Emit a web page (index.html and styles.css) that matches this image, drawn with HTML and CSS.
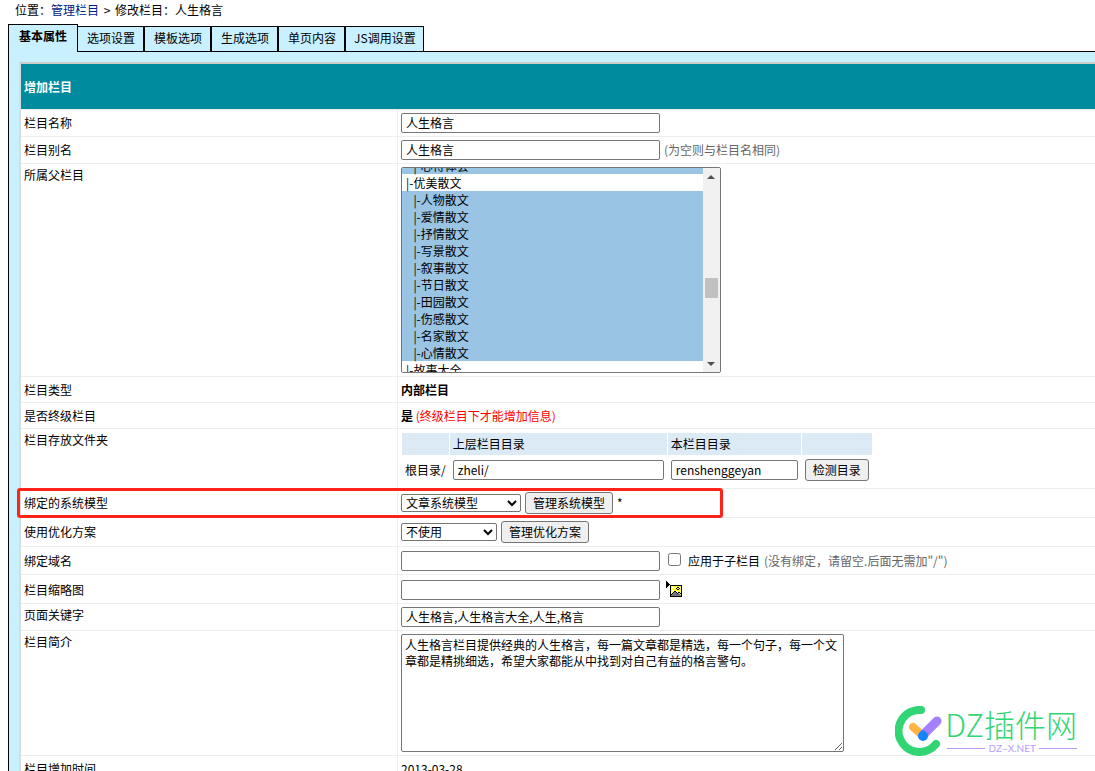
FILE: index.html
```html
<!DOCTYPE html>
<html lang="zh-CN">
<head>
<meta charset="utf-8">
<title>修改栏目</title>
<link rel="stylesheet" href="styles.css">
</head>
<body>
<nav class="crumbs">位置：<a href="#">管理栏目</a> <span class="sep">&gt;</span> 修改栏目：人生格言</nav>
<div class="tabs">
  <button class="tab active" type="button">基本属性</button>
  <button class="tab" type="button">选项设置</button>
  <button class="tab" type="button">模板选项</button>
  <button class="tab" type="button">生成选项</button>
  <button class="tab" type="button">单页内容</button>
  <button class="tab" type="button">JS调用设置</button>
</div>
<form class="panel">
<table class="form">
  <thead><tr><th colspan="2">增加栏目</th></tr></thead>
  <tbody>
  <tr><td class="label"><label for="name">栏目名称</label></td><td><div class="line"><input class="text" id="name" value="人生格言"></div></td></tr>
  <tr><td class="label"><label for="alias">栏目别名</label></td><td><div class="line"><input class="text" id="alias" value="人生格言"><span class="hint">(为空则与栏目名相同)</span></div></td></tr>
  <tr class="top"><td class="label"><label for="parent">所属父栏目</label></td><td>
    <div class="listbox">
      <select id="parent" multiple>
        <option class="mark">&nbsp;&nbsp;|-心得体会</option>
        <option>|-优美散文</option>
        <option class="mark">&nbsp;&nbsp;|-人物散文</option>
        <option class="mark">&nbsp;&nbsp;|-爱情散文</option>
        <option class="mark">&nbsp;&nbsp;|-抒情散文</option>
        <option class="mark">&nbsp;&nbsp;|-写景散文</option>
        <option class="mark">&nbsp;&nbsp;|-叙事散文</option>
        <option class="mark">&nbsp;&nbsp;|-节日散文</option>
        <option class="mark">&nbsp;&nbsp;|-田园散文</option>
        <option class="mark">&nbsp;&nbsp;|-伤感散文</option>
        <option class="mark">&nbsp;&nbsp;|-名家散文</option>
        <option class="mark">&nbsp;&nbsp;|-心情散文</option>
        <option>|-故事大全</option>
      </select>
      <div class="scroll" aria-hidden="true">
        <svg width="16" height="16"><path d="M4 11h8L8 7z" fill="#505050"/></svg>
        <div class="thumb"></div>
        <svg width="16" height="16"><path d="M4 6h8l-4 4z" fill="#505050"/></svg>
      </div>
    </div></td></tr>
  <tr class="plain"><td class="label">栏目类型</td><td><b>内部栏目</b></td></tr>
  <tr class="plain"><td class="label">是否终级栏目</td><td><b>是</b> <span class="red">(终级栏目下才能增加信息)</span></td></tr>
  <tr class="top"><td class="label">栏目存放文件夹</td><td>
    <table class="dirs">
      <tr class="head"><td></td><td><label for="updir">上层栏目目录</label></td><td><label for="dir">本栏目目录</label></td><td></td></tr>
      <tr><td>根目录/</td><td><input class="text updir" id="updir" value="zheli/"></td><td><input class="text dir" id="dir" value="renshenggeyan"></td><td><button class="btn" type="button">检测目录</button></td></tr>
    </table></td></tr>
  <tr><td class="label bound"><label for="model">绑定的系统模型</label><span class="outline"></span></td><td><div class="line">
    <span class="pick model"><select id="model"><option>文章系统模型</option></select><svg class="arrow" viewBox="0 0 10 8"><path d="M1 2l4 4 4-4"/></svg></span>
    <button class="btn" type="button">管理系统模型</button><span>*</span></div></td></tr>
  <tr><td class="label"><label for="plan">使用优化方案</label></td><td><div class="line">
    <span class="pick plan"><select id="plan"><option>不使用</option></select><svg class="arrow" viewBox="0 0 10 8"><path d="M1 2l4 4 4-4"/></svg></span>
    <button class="btn" type="button">管理优化方案</button></div></td></tr>
  <tr class="mid"><td class="label"><label for="domain">绑定域名</label></td><td><div class="line"><input class="text" id="domain"><input class="check" type="checkbox" id="sub"><label for="sub">应用于子栏目</label><span class="hint">(没有绑定，请留空.后面无需加"/")</span></div></td></tr>
  <tr class="image"><td class="label"><label for="thumb">栏目缩略图</label></td><td><div class="line"><input class="text" id="thumb"><a class="pic" href="#" aria-label="选择图片"><svg width="18" height="18" viewBox="0 0 18 18" shape-rendering="crispEdges">
    <path d="M1 0h1v1h1v1h1v1h1v1H4v1H3v1H2v1H1z"/><path d="M5 4h12v12H5z"/><path d="M6 5h10v10H6z" fill="#ffff3c"/><path d="M7 6h2v1H7zM10 6h1v1h-1zM7 9h2v1H7zM11 10h1v1h-1zM14 10h1v1h-1z" fill="#fff"/><path d="M12 6h2v1h-2zM12 8h2v1h-2zM11 7h1v1h-1zM14 7h1v1h-1z"/><path d="M6 15v-1h1v-1h1v-1h1v-1h2v1h1v1h1v-1h1v1h1v1h1v1z" fill="#777"/><path d="M8 11h1v-1h2v1h1v1h1v1h-1v-1h-1v-1H9v1H8zM6 13h1v-1h1v1H7v1H6zM13 11h2v1h1v1h-1v-1h-2z"/></svg></a></div></td></tr>
  <tr class="top"><td class="label"><label for="keys">页面关键字</label></td><td><div class="line"><input class="text" id="keys" value="人生格言,人生格言大全,人生,格言"></div></td></tr>
  <tr class="top"><td class="label"><label for="intro">栏目简介</label></td><td><textarea id="intro">人生格言栏目提供经典的人生格言，每一篇文章都是精选，每一个句子，每一个文章都是精挑细选，希望大家都能从中找到对自己有益的格言警句。</textarea></td></tr>
  <tr class="plain"><td class="label">栏目增加时间</td><td>2013-03-28</td></tr>
  </tbody>
</table>
</form>
<div class="brand">
  <svg width="50" height="50" viewBox="0 0 50 50" fill="none" stroke-linecap="round">
    <path d="M26 4A21 21 0 1 0 41 38" stroke="#32d573" stroke-width="8"/>
    <path d="M18 21l9 8" stroke="#ffb640" stroke-width="8"/>
    <path d="M28 29l14-14" stroke="#a580ff" stroke-width="9"/>
    <path d="M28 24c3 2 5 3 5 6a5 5 0 0 1-10 0c0-3 2-4 5-6z" fill="#1684fc"/>
  </svg>
  <div class="words"><div class="title">DZ插件网</div><div class="site">DZ–X.NET</div></div>
</div>
<script src="main.js"></script>
</body>
</html>
```
FILE: styles.css
```css
* { box-sizing: border-box; }
body {
  margin: 0;
  height: 100vh;
  overflow: hidden;
  position: relative;
  background: #fff;
  color: #000;
  font: 12px/18px "Noto Sans CJK SC", sans-serif;
}
input, select, button, textarea { font: inherit; color: #000; margin: 0; }
.crumbs { padding: 1px 15px 5px; }
.crumbs a { color: #002280; text-decoration: none; }
.sep { margin: 0 2px; }
.tabs { display: flex; align-items: flex-end; height: 27px; padding-left: 8px; }
.tab {
  height: 25px;
  padding: 0 8px 3px 9px;
  border: 1px solid #000;
  border-bottom: 0;
  background: #c8f0ff;
}
.tab:last-child { padding: 0 7px 3px 8px; }
.tab.active {
  position: relative;
  height: 28px;
  padding: 0 10px 6px;
  margin-bottom: -1px;
  font-weight: bold;
}
.active + .tab { border-left: 0; }
.panel {
  border: 1px solid #000;
  border-right: 0;
  background: #c8f0ff;
  padding: 10px 0 10px 10px;
  margin-left: 8px;
}
.form {
  width: 100%;
  border-collapse: separate;
  border-spacing: 0;
  border: 2px solid #ccc;
  border-right: 0;
  border-left-color: #d4dde0;
  background: #fff;
}
.form th {
  height: 45px;
  padding: 3px;
  background: #008c9e;
  color: #fff;
  text-align: left;
}
.form > tbody > tr > td { padding: 3px; border-bottom: 1px solid #eee; }
.form > tbody > tr:first-child > td { border-top: 1px solid #eee; }
.form > tbody > tr > .label { width: 377px; border-right: 1px solid #eee; }
.top > td { vertical-align: top; }
.form > tbody > .top > .label { padding-top: 2px; }
.form > tbody > .plain > td { padding: 4px 3px 3px; }
.form > tbody > .mid > td { padding: 4px 3px 3px; }
.form > tbody > .image > td { padding: 5px 3px 3px; }
.line { display: flex; align-items: center; gap: 4px; }
.text {
  width: 259px;
  height: 20px;
  padding: 0 4px 2px;
  border: 1px solid #767676;
  border-radius: 2px;
  background: #fff;
}
.updir { width: 211px; }
.dir { width: 127px; }
.text, .btn, textarea, .dirs { display: block; }
.hint { color: #666; }
.red { color: #f00; }
.listbox {
  display: flex;
  width: 320px;
  height: 206px;
  border: 1px solid #767676;
  border-radius: 2px;
  overflow: hidden;
}
.listbox select {
  flex: 1;
  height: 204px;
  padding: 0;
  border: 0;
  border-radius: 0;
  outline: 0;
  overflow: hidden;
}
.listbox option { height: 17px; min-height: 17px; padding: 0 4px; line-height: 16px; }
.listbox .mark { padding-left: 6px; background: #99c4e4; }
.scroll {
  width: 17px;
  display: flex;
  flex-direction: column;
  background: #f1f1f1;
}
.scroll svg { flex: none; }
.thumb { height: 20px; margin: 94px 2px auto; background: #c1c1c1; }
.dirs { border-spacing: 1px; }
.dirs td { padding: 3px; }
.head td { height: 22px; padding: 2px 3px; background: #dbeaf5; }
.btn {
  height: 22px;
  padding: 0 7px;
  border: 1px solid #767676;
  border-radius: 3px;
  background: #efefef;
  white-space: nowrap;
}
.pick { position: relative; height: 18px; }
.pick select {
  appearance: none;
  display: block;
  width: 100%;
  height: 18px;
  padding: 0 4px;
  border: 1px solid #767676;
  border-radius: 2px;
  background: #fff;
  line-height: 16px;
}
.model { width: 120px; }
.plan { width: 96px; }
.arrow {
  position: absolute;
  right: 4px;
  top: 5px;
  width: 10px;
  height: 8px;
  fill: none;
  stroke: #000;
  stroke-width: 2;
  pointer-events: none;
}
.bound { position: relative; }
.outline {
  position: absolute;
  left: -4px;
  top: -1px;
  width: 706px;
  height: 30px;
  border: 3px solid #ff2419;
  border-radius: 3px;
  pointer-events: none;
}
.check { width: 13px; height: 13px; margin: 0 3px 3px 4px; }
.pic { height: 18px; margin-left: 1px; }
.pic svg { display: block; }
textarea {
  width: 443px;
  height: 118px;
  padding: 2px 3px;
  border: 1px solid #767676;
  border-radius: 2px;
  line-height: 16px;
}
.brand {
  position: absolute;
  right: 18px;
  bottom: 15px;
  display: flex;
}
.title { font-size: 31px; line-height: 35px; color: #32d573; font-weight: 300; }
.site {
  display: flex;
  align-items: center;
  gap: 3px;
  margin-top: 1px;
  padding-left: 2px;
  font: 10px/12px Lato, sans-serif;
  color: #b79cff;
}
.site::before, .site::after { content: ""; flex: 1; height: 1px; background: #b79cff; }
```
FILE: main.js
```js
document.getElementById("parent").scrollTop = 11;
```
